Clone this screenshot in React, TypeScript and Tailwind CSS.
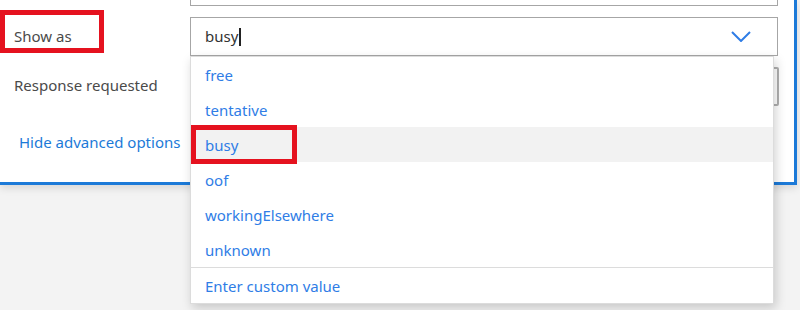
const options = ['free', 'tentative', 'busy', 'oof', 'workingElsewhere', 'unknown']

function Chevron() {
  return (
    <svg width="20" height="11" viewBox="0 0 20 11" className="text-[#2f7de6]">
      <path d="M1 1l9 9 9-9" fill="none" stroke="currentColor" strokeWidth="2" />
    </svg>
  )
}

function Dropdown() {
  return (
    <div className="absolute left-[190px] top-[56px] z-10 w-[584px] border border-[#dcdcdc] bg-white shadow-[2px_4px_10px_rgba(0,0,0,0.18)]">
      {options.map((o) => (
        <div
          key={o}
          className={`flex h-[35px] items-center px-[14px] pt-[2px] text-[15px] text-[#2f7de6] ${
            o === 'busy' ? 'bg-[#f2f2f2]' : ''
          }`}
        >
          {o}
        </div>
      ))}
      <div className="flex h-[36px] items-center border-t border-[#dcdcdc] px-[14px] pt-[2px] text-[15px] text-[#2f7de6]">
        Enter custom value
      </div>
    </div>
  )
}

export default function App() {
  return (
    <div
      className="relative h-[310px] w-[800px] overflow-hidden bg-[#f3f3f3]"
      style={{ fontFamily: '"Noto Sans", "Open Sans", sans-serif' }}
    >
      <div className="h-[185px] w-[797px] border-r-[3px] border-b-[3px] border-[#1c7ad8] bg-white shadow-[0_3px_8px_rgba(0,0,0,0.12)]">
        <div className="ml-[190px] h-[6px] w-[588px] border-x border-b border-[#a6a6a6]" />

        <div className="mt-[11px] flex h-[39px] items-center">
          <div className="w-[190px] pl-[14px] text-[15px] text-[#4a4a4a]">Show as</div>
          <div className="flex h-full w-[588px] items-center justify-between border border-[#a6a6a6] pl-[14px] pr-[26px]">
            <div className="flex items-center text-[15px] text-[#333]">
              busy
              <span className="ml-[1px] h-[18px] w-[2px] bg-[#222]" />
            </div>
            <Chevron />
          </div>
        </div>

        <div className="mt-[11px] flex h-[39px] items-center">
          <div className="w-[190px] pb-[3px] pl-[14px] text-[15px] text-[#4a4a4a]">Response requested</div>
          <div className="h-full w-[589px] rounded-[2px] border-2 border-[#b0b0b0]" />
        </div>

        <div className="mt-[25px] pl-[19px] text-[15px] text-[#1c7ad8]">Hide advanced options</div>
      </div>

      <Dropdown />

      <div className="absolute left-0 top-[10px] h-[43px] w-[104px] border-[5px] border-[#e5121f]" />
      <div className="absolute left-[191px] top-[125px] z-20 h-[39px] w-[106px] border-[5px] border-[#e5121f]" />
    </div>
  )
}
